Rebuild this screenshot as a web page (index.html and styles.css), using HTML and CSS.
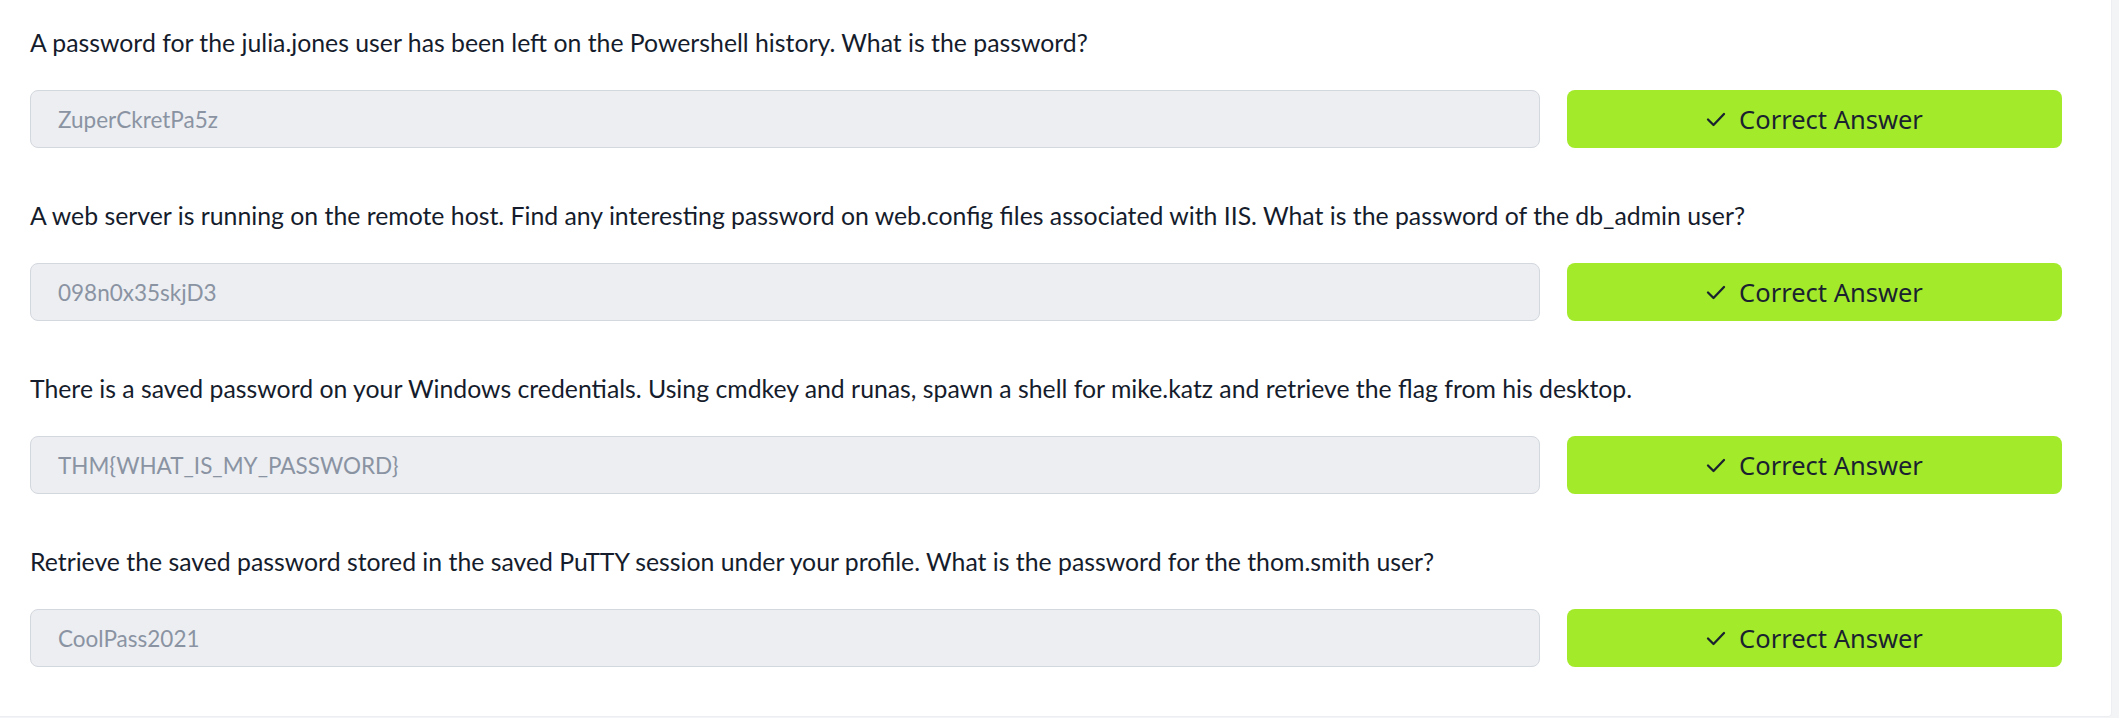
FILE: index.html
```html
<!DOCTYPE html>
<html lang="en">
<head>
<meta charset="utf-8">
<title>Questions</title>
<link rel="stylesheet" href="styles.css">
</head>
<body>
<div class="card">
  <div class="qa">
    <p class="question">A password for the julia.jones user has been left on the Powershell history. What is the password?</p>
    <div class="answer-row">
      <div class="answer-input">ZuperCkretPa5z</div>
      <button class="answer-btn"><svg class="check" viewBox="0 0 20 15" width="20" height="15"><polyline points="2,7.5 7.5,13 18,2" fill="none" stroke="#1a2230" stroke-width="2.3" stroke-linecap="round" stroke-linejoin="round"/></svg><span>Correct Answer</span></button>
    </div>
  </div>
  <div class="qa">
    <p class="question">A web server is running on the remote host. Find any interesting password on web.config files associated with IIS. What is the password of the db_admin user?</p>
    <div class="answer-row">
      <div class="answer-input">098n0x35skjD3</div>
      <button class="answer-btn"><svg class="check" viewBox="0 0 20 15" width="20" height="15"><polyline points="2,7.5 7.5,13 18,2" fill="none" stroke="#1a2230" stroke-width="2.3" stroke-linecap="round" stroke-linejoin="round"/></svg><span>Correct Answer</span></button>
    </div>
  </div>
  <div class="qa">
    <p class="question">There is a saved password on your Windows credentials. Using cmdkey and runas, spawn a shell for mike.katz and retrieve the flag from his desktop.</p>
    <div class="answer-row">
      <div class="answer-input">THM{WHAT_IS_MY_PASSWORD}</div>
      <button class="answer-btn"><svg class="check" viewBox="0 0 20 15" width="20" height="15"><polyline points="2,7.5 7.5,13 18,2" fill="none" stroke="#1a2230" stroke-width="2.3" stroke-linecap="round" stroke-linejoin="round"/></svg><span>Correct Answer</span></button>
    </div>
  </div>
  <div class="qa">
    <p class="question">Retrieve the saved password stored in the saved PuTTY session under your profile. What is the password for the thom.smith user?</p>
    <div class="answer-row">
      <div class="answer-input">CoolPass2021</div>
      <button class="answer-btn"><svg class="check" viewBox="0 0 20 15" width="20" height="15"><polyline points="2,7.5 7.5,13 18,2" fill="none" stroke="#1a2230" stroke-width="2.3" stroke-linecap="round" stroke-linejoin="round"/></svg><span>Correct Answer</span></button>
    </div>
  </div>
</div>
</body>
</html>
```

FILE: styles.css
```css
html, body {
  margin: 0;
  padding: 0;
}
body {
  background: #f3f4f6;
  font-family: "Lato", "Liberation Sans", sans-serif;
  width: 2119px;
  height: 718px;
  overflow: hidden;
}
.card {
  width: 2112px;
  box-sizing: border-box;
  background: #ffffff;
  padding: 25px 49px 49px 30px;
  border-right: 1px solid #eceef1;
  border-bottom: 1px solid #eceef1;
  border-bottom-right-radius: 4px;
}
.qa {
  margin-bottom: 50px;
}
.qa:last-child {
  margin-bottom: 0;
}
.question {
  margin: 0 0 29px 0;
  font-size: 24.8px;
  line-height: 36px;
  color: #151c2c;
  white-space: nowrap;
}
.answer-row {
  display: grid;
  grid-template-columns: 1fr 495px;
  gap: 27px;
  height: 58px;
}
.answer-input {
  box-sizing: border-box;
  background: #eceef2;
  border: 1px solid #d3d7de;
  border-radius: 8px;
  padding: 0 27px;
  display: flex;
  align-items: center;
  font-size: 22.5px;
  color: #8a93a2;
}
.answer-btn {
  box-sizing: border-box;
  border: none;
  border-radius: 8px;
  background: #a3ea2a;
  display: flex;
  align-items: center;
  justify-content: center;
  gap: 13px;
  font-family: "Noto Sans", "Open Sans", sans-serif;
  font-size: 25.5px;
  color: #1a2230;
  padding: 0;
}
.check {
  display: block;
}
```
